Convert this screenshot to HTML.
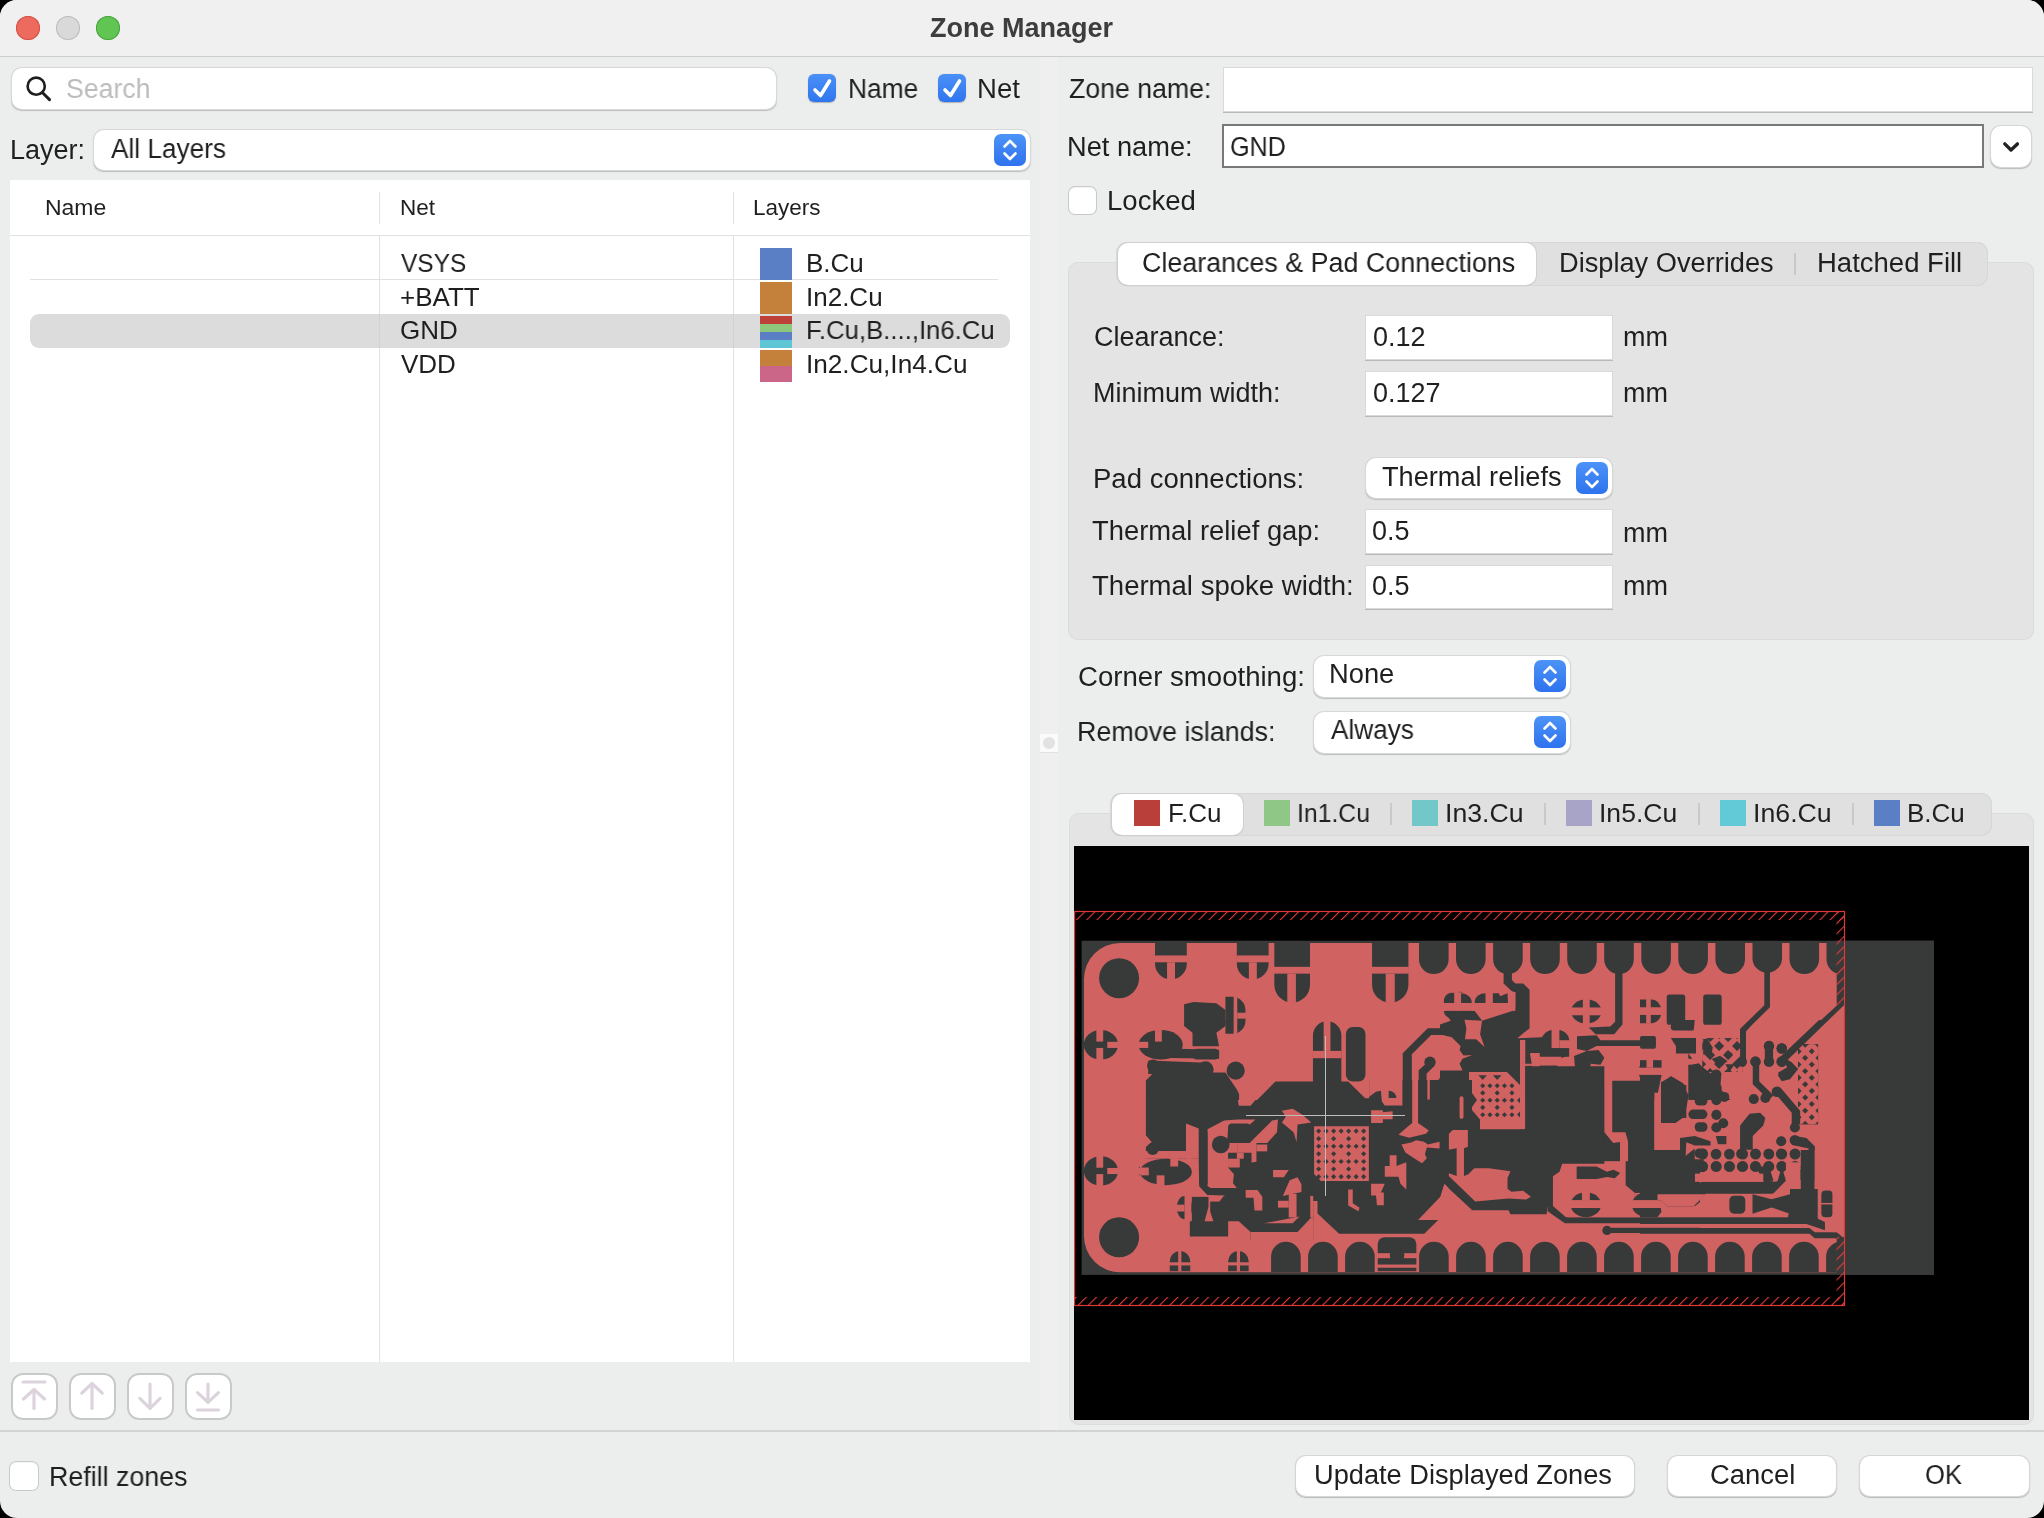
<!DOCTYPE html>
<html><head><meta charset="utf-8">
<style>
*{box-sizing:border-box}
html,body{margin:0;padding:0;width:2044px;height:1518px;overflow:hidden;background:#000}
body{font-family:"Liberation Sans",sans-serif;color:#1f1f1f}
#win{position:absolute;left:0;top:0;width:2044px;height:1518px;border-radius:17px;background:#eceeed;overflow:hidden}
.a{position:absolute}
.t{position:absolute;white-space:nowrap;line-height:1;will-change:transform}
.tl{position:absolute;top:16px;width:24px;height:24px;border-radius:50%}
.field{position:absolute;background:#fff;box-shadow:0 0 0 1px #d9d9d9, 0 1px 0 1px #b9b9b9}
.rfield{position:absolute;background:#fff;border-radius:10px;box-shadow:0 0 0 1px #d8d8d8, 0 1px 1px 0.5px #bdbdbd}
.cb{position:absolute;width:28px;height:28px;border-radius:6px;background:linear-gradient(#4b90f7,#2f75ee);box-shadow:0 0.5px 1px rgba(0,0,0,.25)}
.cbo{position:absolute;width:28px;height:28px;border-radius:6px;background:#fff;box-shadow:0 0 0 1px #c9c9c9, inset 0 1px 1px rgba(0,0,0,.05)}
.step{position:absolute;width:32px;height:32px;border-radius:7px;background:linear-gradient(#4c93f7,#2f72ee)}
.btn{position:absolute;background:#fff;border-radius:10px;box-shadow:0 0 0 1px #d6d6d6, 0 1px 1px 0.5px #bbbbbb}
.ibtn{position:absolute;width:47px;height:47px;background:#fff;border-radius:12px;box-shadow:inset 0 0 0 2px #c9c9c9}
.sw{position:absolute;width:26px;height:26px}
.sep{position:absolute;width:2px;height:22px;background:#c8c9c8}
</style></head><body>
<div id="win">
  <!-- title bar -->
  <div class="a" style="left:0;top:0;width:2044px;height:56px;background:#f0f0f0"></div>
  <div class="a" style="left:0;top:55.5px;width:2044px;height:1.5px;background:#cbcdcc"></div>
  <div class="tl" style="left:16px;background:#ec6a5e;box-shadow:inset 0 0 0 1px #d5514a"></div>
  <div class="tl" style="left:56px;background:#d9d9d9;box-shadow:inset 0 0 0 1px #bcbcbc"></div>
  <div class="tl" style="left:96px;background:#61c554;box-shadow:inset 0 0 0 1px #4ba43f"></div>

  <!-- splitter strip -->
  <div class="a" style="left:1040px;top:57px;width:18px;height:1373px;background:#eeefee"></div>
  <div class="a" style="left:1040px;top:734px;width:18px;height:18px;background:#fafafa;box-shadow:0 1px 0 #e2e2e2"></div>
  <div class="a" style="left:1043px;top:737px;width:12px;height:12px;border-radius:50%;background:#e2e2e2"></div>

  <!-- LEFT PANEL -->
  <div class="rfield" style="left:12px;top:67.5px;width:764px;height:41px"></div>
  <svg class="a" style="left:20px;top:70px" width="40" height="40" viewBox="0 0 40 40">
    <circle cx="16.2" cy="16.2" r="8.6" fill="none" stroke="#1e1e1e" stroke-width="2.6"/>
    <line x1="22.6" y1="22.8" x2="29.5" y2="29.6" stroke="#1e1e1e" stroke-width="3" stroke-linecap="round"/>
  </svg>
  <div class="cb" style="left:808px;top:74px"></div>
  <svg class="a" style="left:808px;top:74px" width="28" height="28" viewBox="0 0 28 28"><polyline points="7,16 12.5,21.5 21.5,7" fill="none" stroke="#fff" stroke-width="3.6" stroke-linecap="round" stroke-linejoin="round"/></svg>
  <div class="cb" style="left:938px;top:74px"></div>
  <svg class="a" style="left:938px;top:74px" width="28" height="28" viewBox="0 0 28 28"><polyline points="7,16 12.5,21.5 21.5,7" fill="none" stroke="#fff" stroke-width="3.6" stroke-linecap="round" stroke-linejoin="round"/></svg>

  <div class="rfield" style="left:94px;top:129.5px;width:936px;height:40.5px"></div>
  <div class="step" style="left:994px;top:134px"></div>
  <svg class="a" style="left:994px;top:134px" width="32" height="32" viewBox="0 0 32 32"><polyline points="10.5,12.5 16,7 21.5,12.5" fill="none" stroke="#fff" stroke-width="2.6" stroke-linecap="round" stroke-linejoin="round"/><polyline points="10.5,19.5 16,25 21.5,19.5" fill="none" stroke="#fff" stroke-width="2.6" stroke-linecap="round" stroke-linejoin="round"/></svg>

  <!-- table -->
  <div class="a" style="left:10px;top:180px;width:1020px;height:1182px;background:#fff"></div>
  <div class="a" style="left:10px;top:234.5px;width:1020px;height:1.5px;background:#e1e1e1"></div>
  <div class="a" style="left:378.5px;top:192px;width:1.5px;height:32px;background:#e1e1e1"></div>
  <div class="a" style="left:732.5px;top:192px;width:1.5px;height:32px;background:#e1e1e1"></div>
  <div class="a" style="left:378.5px;top:236px;width:1.5px;height:1126px;background:#e1e1e1"></div>
  <div class="a" style="left:732.5px;top:236px;width:1.5px;height:1126px;background:#e1e1e1"></div>
  <div class="a" style="left:30px;top:278.5px;width:968px;height:1.5px;background:#e1e1e1"></div>
  <div class="a" style="left:30px;top:314px;width:980px;height:34px;border-radius:9px;background:#dcdcdc"></div>
  <div class="a" style="left:378.5px;top:314px;width:1.5px;height:34px;background:#d2d2d2"></div>
  <div class="a" style="left:732.5px;top:314px;width:1.5px;height:34px;background:#d2d2d2"></div>
  <div class="a" style="left:760px;top:248px;width:32px;height:32px;background:#5a7fc4"></div>
  <div class="a" style="left:760px;top:282px;width:32px;height:32px;background:#c3813c"></div>
  <div class="a" style="left:760px;top:316px;width:32px;height:8px;background:#bd4139"></div>
  <div class="a" style="left:760px;top:324px;width:32px;height:8px;background:#8ec77c"></div>
  <div class="a" style="left:760px;top:332px;width:32px;height:8px;background:#5a7fc4"></div>
  <div class="a" style="left:760px;top:340px;width:32px;height:8px;background:#5dc5d4"></div>
  <div class="a" style="left:760px;top:350px;width:32px;height:16px;background:#c3813c"></div>
  <div class="a" style="left:760px;top:366px;width:32px;height:16px;background:#cc6688"></div>

  <!-- icon buttons -->
  <div class="ibtn" style="left:10.5px;top:1372.5px"></div>
  <div class="ibtn" style="left:68.5px;top:1372.5px"></div>
  <div class="ibtn" style="left:126.5px;top:1372.5px"></div>
  <div class="ibtn" style="left:184.5px;top:1372.5px"></div>
  <svg class="a" style="left:0;top:1360px" width="240" height="70" viewBox="0 1360 240 70">
    <g fill="none" stroke="#dcd3dd" stroke-width="3.2" stroke-linecap="round" stroke-linejoin="round">
      <line x1="23" y1="1382" x2="45" y2="1382"/>
      <polyline points="23.5,1399 34,1389.5 44.5,1399"/><line x1="34" y1="1390" x2="34" y2="1408.5"/>
      <polyline points="81.8,1393.2 92,1383.5 102.2,1393.2"/><line x1="92" y1="1384" x2="92" y2="1408.5"/>
      <polyline points="139.8,1398.4 150,1408.3 160.2,1398.4"/><line x1="150" y1="1384" x2="150" y2="1408"/>
      <polyline points="197.5,1392.6 208,1402.3 218.4,1392.6"/><line x1="208" y1="1384" x2="208" y2="1402"/>
      <line x1="197.5" y1="1410" x2="218.5" y2="1410"/>
    </g>
  </svg>

  <!-- RIGHT PANEL -->
  <div class="field" style="left:1224px;top:67.5px;width:808px;height:43px"></div>
  <div class="a" style="left:1222px;top:124px;width:762px;height:44px;background:#fff;border:2px solid #787878"></div>
  <div class="btn" style="left:1991px;top:125.5px;width:40px;height:41px"></div>
  <svg class="a" style="left:1991px;top:125.5px" width="40" height="41" viewBox="0 0 40 41"><polyline points="13.8,17.9 20,24 26.4,17.9" fill="none" stroke="#222" stroke-width="3.4" stroke-linecap="round" stroke-linejoin="round"/></svg>
  <div class="cbo" style="left:1068.5px;top:186.5px;width:27px;height:27px"></div>

  <!-- tab panel -->
  <div class="a" style="left:1068px;top:262px;width:965.5px;height:377.5px;border-radius:10px;background:#e3e4e3;box-shadow:inset 0 0 0 1px #dbdcdb"></div>
  <div class="a" style="left:1116px;top:242px;width:872px;height:43.5px;border-radius:11px;background:#dfe0df;box-shadow:inset 0 0 0 1px #d6d7d6"></div>
  <div class="a" style="left:1117.5px;top:243px;width:418.5px;height:41.5px;border-radius:10px;background:#fff;box-shadow:0 0 0 1px #d0d0d0, 0 1px 1px #b4b4b4"></div>
  <div class="sep" style="left:1794px;top:253px"></div>

  <div class="field" style="left:1366px;top:315.5px;width:246px;height:43px"></div>
  <div class="field" style="left:1366px;top:371.5px;width:246px;height:43px"></div>
  <div class="rfield" style="left:1366px;top:457.5px;width:246px;height:40.5px"></div>
  <div class="step" style="left:1576px;top:462px"></div>
  <svg class="a" style="left:1576px;top:462px" width="32" height="32" viewBox="0 0 32 32"><polyline points="10.5,12.5 16,7 21.5,12.5" fill="none" stroke="#fff" stroke-width="2.6" stroke-linecap="round" stroke-linejoin="round"/><polyline points="10.5,19.5 16,25 21.5,19.5" fill="none" stroke="#fff" stroke-width="2.6" stroke-linecap="round" stroke-linejoin="round"/></svg>
  <div class="field" style="left:1366px;top:510px;width:246px;height:42.5px"></div>
  <div class="field" style="left:1366px;top:565.5px;width:246px;height:42.5px"></div>

  <div class="rfield" style="left:1314px;top:656px;width:256px;height:40.5px"></div>
  <div class="step" style="left:1534px;top:660px"></div>
  <svg class="a" style="left:1534px;top:660px" width="32" height="32" viewBox="0 0 32 32"><polyline points="10.5,12.5 16,7 21.5,12.5" fill="none" stroke="#fff" stroke-width="2.6" stroke-linecap="round" stroke-linejoin="round"/><polyline points="10.5,19.5 16,25 21.5,19.5" fill="none" stroke="#fff" stroke-width="2.6" stroke-linecap="round" stroke-linejoin="round"/></svg>
  <div class="rfield" style="left:1314px;top:712px;width:256px;height:40.5px"></div>
  <div class="step" style="left:1534px;top:716px"></div>
  <svg class="a" style="left:1534px;top:716px" width="32" height="32" viewBox="0 0 32 32"><polyline points="10.5,12.5 16,7 21.5,12.5" fill="none" stroke="#fff" stroke-width="2.6" stroke-linecap="round" stroke-linejoin="round"/><polyline points="10.5,19.5 16,25 21.5,19.5" fill="none" stroke="#fff" stroke-width="2.6" stroke-linecap="round" stroke-linejoin="round"/></svg>

  <!-- canvas panel -->
  <div class="a" style="left:1068.5px;top:812.5px;width:965px;height:612.5px;border-radius:10px;background:#e3e4e3;box-shadow:inset 0 0 0 1px #dbdcdb"></div>
  <div class="a" style="left:1110px;top:792.5px;width:882px;height:43px;border-radius:11px;background:#dfe0df;box-shadow:inset 0 0 0 1px #d6d7d6"></div>
  <div class="a" style="left:1111.5px;top:793.5px;width:131px;height:41px;border-radius:10px;background:#fff;box-shadow:0 0 0 1px #d0d0d0, 0 1px 1px #b4b4b4"></div>
  <div class="sw" style="left:1134px;top:800px;background:#b9403a"></div>
  <div class="sw" style="left:1264px;top:800px;background:#8fc886"></div>
  <div class="sw" style="left:1412px;top:800px;background:#72c8c8"></div>
  <div class="sw" style="left:1566px;top:800px;background:#a8a4c8"></div>
  <div class="sw" style="left:1720px;top:800px;background:#62c9d6"></div>
  <div class="sw" style="left:1874px;top:800px;background:#5a7fc4"></div>
  <div class="sep" style="left:1390px;top:803px"></div>
  <div class="sep" style="left:1544px;top:803px"></div>
  <div class="sep" style="left:1698px;top:803px"></div>
  <div class="sep" style="left:1852px;top:803px"></div>
  <div class="a" style="left:1074px;top:846px;width:954.5px;height:574px;background:#000;overflow:hidden">
<svg width="954.5" height="574" viewBox="1074 846 954.5 574" style="position:absolute;left:0;top:0;display:block">
<rect x="1074" y="846" width="955" height="574" fill="#000"/>
<rect x="1081.6" y="940.7" width="852.3" height="334.2" fill="#383a3a"/>
<path d="M1120,943 L1844.5,943 L1844.5,1272.2 L1120,1272.2 A36,36 0 0 1 1084,1236.2 L1084,979 A36,36 0 0 1 1120,943 Z" fill="#d16262"/>
<g transform="translate(1080,935) scale(0.227273)"><path d="M330,35 L470,35 L470,125 A70,70 0 0 1 400,195 L400,195 A70,70 0 0 1 330,125 Z" fill="#383a3a"/><rect x="328" y="90" width="144" height="30" fill="#d16262"/><rect x="383" y="120" width="35" height="77" fill="#d16262"/><path d="M690,35 L830,35 L830,125 A70,70 0 0 1 760,195 L760,195 A70,70 0 0 1 690,125 Z" fill="#383a3a"/><rect x="688" y="90" width="144" height="30" fill="#d16262"/><rect x="743" y="120" width="35" height="77" fill="#d16262"/><path d="M855,35 L1012,35 L1012,219 A78,78 0 0 1 934,297 L933,297 A78,78 0 0 1 855,219 Z" fill="#383a3a"/><rect x="853" y="140" width="161" height="30" fill="#d16262"/><rect x="912" y="170" width="38" height="129" fill="#d16262"/><path d="M1285,35 L1445,35 L1445,219 A78,78 0 0 1 1367,297 L1363,297 A78,78 0 0 1 1285,219 Z" fill="#383a3a"/><rect x="1283" y="140" width="164" height="30" fill="#d16262"/><rect x="1345" y="170" width="40" height="129" fill="#d16262"/><circle cx="172" cy="190" r="88" fill="#383a3a"/><circle cx="172" cy="1330" r="88" fill="#383a3a"/><ellipse cx="92" cy="483" rx="75" ry="65" fill="#383a3a"/><rect x="72" y="416" width="30" height="53" fill="#d16262"/><rect x="72" y="497" width="30" height="53" fill="#d16262"/><rect x="120" y="470" width="52" height="27" fill="#d16262"/><ellipse cx="355" cy="483" rx="97" ry="65" fill="#383a3a"/><rect x="330" y="416" width="30" height="53" fill="#d16262"/><rect x="255" y="470" width="45" height="27" fill="#d16262"/><ellipse cx="92" cy="1038" rx="75" ry="65" fill="#383a3a"/><rect x="72" y="971" width="30" height="53" fill="#d16262"/><rect x="72" y="1052" width="30" height="53" fill="#d16262"/><rect x="120" y="1025" width="52" height="27" fill="#d16262"/><ellipse cx="355" cy="1038" rx="97" ry="65" fill="#383a3a"/><rect x="330" y="971" width="30" height="53" fill="#d16262"/><rect x="330" y="1052" width="30" height="53" fill="#d16262"/><rect x="255" y="1025" width="45" height="27" fill="#d16262"/><path d="M395,1480 L395,1435 A45,45 0 0 1 485,1435 L485,1480 Z" fill="#383a3a"/><rect x="432" y="1390" width="14" height="90" fill="#d16262"/><rect x="390" y="1440" width="100" height="14" fill="#d16262"/><path d="M652,1480 L652,1435 A45,45 0 0 1 742,1435 L742,1480 Z" fill="#383a3a"/><rect x="690" y="1390" width="14" height="90" fill="#d16262"/><rect x="647" y="1440" width="100" height="14" fill="#d16262"/><path d="M458,305 L500,295 L600,300 L640,330 L640,400 L600,430 L612,490 L495,490 L495,430 L458,400 Z" fill="#383a3a"/><path d="M640,272 L670,272 A58,58 0 0 1 728,330 L728,377 A58,58 0 0 1 670,435 L640,435 Z" fill="#383a3a"/><rect x="676" y="268" width="16" height="172" fill="#d16262"/><rect x="692" y="342" width="40" height="26" fill="#d16262"/><rect x="580" y="360" width="60" height="30" fill="#383a3a" transform="rotate(35 610 375)"/><rect x="495" y="500" width="117" height="48" rx="20" fill="#383a3a"/><path d="M330,498 L612,505 L612,545 L330,540 Z" fill="#383a3a"/><circle cx="322" cy="575" r="27" fill="#383a3a"/><circle cx="552" cy="592" r="36" fill="#383a3a"/><circle cx="685" cy="597" r="40" fill="#383a3a"/><path d="M300,552 L560,562 L560,612 L300,612 Z" fill="#383a3a"/><path d="M290,640 L325,605 L640,605 L690,680 L700,700 L700,750 L755,750 L860,645 L1025,645 L1025,540 L1150,540 L1150,645 L1180,645 L1255,718 L1420,718 L1420,860 L1600,1040 L1600,1230 L1515,1315 L1140,1315 L1045,1225 L1045,1170 L1012,1170 L1012,1230 L935,1305 L745,1305 L690,1250 L690,1140 L560,1140 L525,1105 L525,860 L470,860 L470,945 L305,945 L290,920 Z" fill="#383a3a"/><path d="M1025,540 L1025,442 A62,62 0 0 1 1150,442 L1150,540 Z" fill="#383a3a"/><rect x="1072" y="378" width="30" height="132" fill="#d16262"/><rect x="1025" y="510" width="125" height="32" fill="#d16262"/><rect x="1170" y="405" width="86" height="240" rx="30" fill="#383a3a"/><path d="M560,860 L560,1100 L690,1100 L690,1000 L650,960 L650,880 Z" fill="#d16262"/><circle cx="618" cy="922" r="38" fill="#383a3a"/><path d="M650,870 L760,815 L850,815 L850,880 L780,900 L760,960 L700,990 L650,960 Z" fill="#d16262"/><path d="M700,880 L840,860 L860,830 L880,860 L760,930 Z" fill="#383a3a"/><path d="M890,770 L940,770 L1000,830 L950,850 L950,905 L915,850 L890,830 Z" fill="#d16262"/><path d="M760,900 L830,900 L830,950 L760,950 Z" fill="#d16262"/><path d="M655,960 L720,960 L760,1040 L720,1090 L655,1090 Z" fill="#d16262"/><rect x="850" y="1035" width="70" height="30" fill="#d16262"/><path d="M870,1100 L940,1080 L975,1120 L960,1270 L820,1270 L880,1230 L900,1170 Z" fill="#d16262"/><path d="M720,1110 L800,1130 L800,1210 L770,1210 L750,1150 Z" fill="#d16262"/><circle cx="940" cy="1200" r="62" fill="#383a3a"/><rect x="895" y="1205" width="70" height="16" fill="#d16262"/><rect x="925" y="1140" width="14" height="130" fill="#d16262"/><path d="M490,1170 L650,1170 L650,1330 L490,1330 Z" fill="#383a3a"/><path d="M425,1150 A50,50 0 0 1 490,1200 L490,1250 A50,50 0 0 1 425,1250 Z" fill="#383a3a"/><rect x="455" y="1140" width="14" height="120" fill="#d16262"/><rect x="420" y="1195" width="70" height="14" fill="#d16262"/><path d="M545,1190 L590,1190 L580,1260 L550,1260 Z" fill="#d16262"/><rect x="600" y="1140" width="35" height="120" fill="#d16262"/><polygon points="1030,842 1271,842 1271,1082 1060,1082 1030,1052" fill="#d16262"/><rect x="1042" y="854.8" width="16" height="16" fill="#383a3a" transform="rotate(45 1050 862.8)"/><rect x="1075" y="854.8" width="16" height="16" fill="#383a3a" transform="rotate(45 1083 862.8)"/><rect x="1108" y="854.8" width="16" height="16" fill="#383a3a" transform="rotate(45 1116 862.8)"/><rect x="1141" y="854.8" width="16" height="16" fill="#383a3a" transform="rotate(45 1149 862.8)"/><rect x="1174" y="854.8" width="16" height="16" fill="#383a3a" transform="rotate(45 1182 862.8)"/><rect x="1207" y="854.8" width="16" height="16" fill="#383a3a" transform="rotate(45 1215 862.8)"/><rect x="1240" y="854.8" width="16" height="16" fill="#383a3a" transform="rotate(45 1248 862.8)"/><rect x="1042" y="888.1999999999999" width="16" height="16" fill="#383a3a" transform="rotate(45 1050 896.1999999999999)"/><rect x="1108" y="888.1999999999999" width="16" height="16" fill="#383a3a" transform="rotate(45 1116 896.1999999999999)"/><rect x="1174" y="888.1999999999999" width="16" height="16" fill="#383a3a" transform="rotate(45 1182 896.1999999999999)"/><rect x="1240" y="888.1999999999999" width="16" height="16" fill="#383a3a" transform="rotate(45 1248 896.1999999999999)"/><rect x="1042" y="921.5999999999999" width="16" height="16" fill="#383a3a" transform="rotate(45 1050 929.5999999999999)"/><rect x="1075" y="921.5999999999999" width="16" height="16" fill="#383a3a" transform="rotate(45 1083 929.5999999999999)"/><rect x="1108" y="921.5999999999999" width="16" height="16" fill="#383a3a" transform="rotate(45 1116 929.5999999999999)"/><rect x="1141" y="921.5999999999999" width="16" height="16" fill="#383a3a" transform="rotate(45 1149 929.5999999999999)"/><rect x="1174" y="921.5999999999999" width="16" height="16" fill="#383a3a" transform="rotate(45 1182 929.5999999999999)"/><rect x="1207" y="921.5999999999999" width="16" height="16" fill="#383a3a" transform="rotate(45 1215 929.5999999999999)"/><rect x="1240" y="921.5999999999999" width="16" height="16" fill="#383a3a" transform="rotate(45 1248 929.5999999999999)"/><rect x="1042" y="955.0" width="16" height="16" fill="#383a3a" transform="rotate(45 1050 963.0)"/><rect x="1108" y="955.0" width="16" height="16" fill="#383a3a" transform="rotate(45 1116 963.0)"/><rect x="1174" y="955.0" width="16" height="16" fill="#383a3a" transform="rotate(45 1182 963.0)"/><rect x="1240" y="955.0" width="16" height="16" fill="#383a3a" transform="rotate(45 1248 963.0)"/><rect x="1042" y="988.4" width="16" height="16" fill="#383a3a" transform="rotate(45 1050 996.4)"/><rect x="1075" y="988.4" width="16" height="16" fill="#383a3a" transform="rotate(45 1083 996.4)"/><rect x="1108" y="988.4" width="16" height="16" fill="#383a3a" transform="rotate(45 1116 996.4)"/><rect x="1141" y="988.4" width="16" height="16" fill="#383a3a" transform="rotate(45 1149 996.4)"/><rect x="1174" y="988.4" width="16" height="16" fill="#383a3a" transform="rotate(45 1182 996.4)"/><rect x="1207" y="988.4" width="16" height="16" fill="#383a3a" transform="rotate(45 1215 996.4)"/><rect x="1240" y="988.4" width="16" height="16" fill="#383a3a" transform="rotate(45 1248 996.4)"/><rect x="1042" y="1021.8" width="16" height="16" fill="#383a3a" transform="rotate(45 1050 1029.8)"/><rect x="1108" y="1021.8" width="16" height="16" fill="#383a3a" transform="rotate(45 1116 1029.8)"/><rect x="1174" y="1021.8" width="16" height="16" fill="#383a3a" transform="rotate(45 1182 1029.8)"/><rect x="1240" y="1021.8" width="16" height="16" fill="#383a3a" transform="rotate(45 1248 1029.8)"/><rect x="1042" y="1055.1999999999998" width="16" height="16" fill="#383a3a" transform="rotate(45 1050 1063.1999999999998)"/><rect x="1075" y="1055.1999999999998" width="16" height="16" fill="#383a3a" transform="rotate(45 1083 1063.1999999999998)"/><rect x="1108" y="1055.1999999999998" width="16" height="16" fill="#383a3a" transform="rotate(45 1116 1063.1999999999998)"/><rect x="1141" y="1055.1999999999998" width="16" height="16" fill="#383a3a" transform="rotate(45 1149 1063.1999999999998)"/><rect x="1174" y="1055.1999999999998" width="16" height="16" fill="#383a3a" transform="rotate(45 1182 1063.1999999999998)"/><rect x="1207" y="1055.1999999999998" width="16" height="16" fill="#383a3a" transform="rotate(45 1215 1063.1999999999998)"/><rect x="1240" y="1055.1999999999998" width="16" height="16" fill="#383a3a" transform="rotate(45 1248 1063.1999999999998)"/><path d="M1285,775 L1380,770 L1380,830 L1285,830 Z" fill="#d16262"/><path d="M1400,870 L1440,840 L1530,860 L1480,900 L1420,900 Z" fill="#d16262"/><path d="M1440,930 L1530,920 L1560,950 L1500,1000 L1440,960 Z" fill="#d16262"/><path d="M1340,1000 L1380,980 L1400,1050 L1430,1120 L1390,1190 L1300,1190 L1300,1120 L1350,1090 Z" fill="#d16262"/><path d="M1180,1120 L1200,1120 L1200,1180 L1230,1200 L1225,1215 L1180,1190 Z" fill="#d16262"/><path d="M1350,700 L1400,690 L1400,745 L1350,745 Z" fill="#383a3a"/><circle cx="1365" cy="720" r="40" fill="#383a3a"/><rect x="1345" y="690" width="12" height="60" fill="#d16262"/><path d="M1420,880 L1420,520 L1530,410 L1680,410 L1680,440 L1545,440 L1460,525 L1460,880 Z" fill="#383a3a"/><path d="M1490,740 L1490,595 L1540,550 L1560,575 L1525,610 L1525,740 Z" fill="#383a3a"/><circle cx="1540" cy="560" r="25" fill="#383a3a"/><path d="M1540,640 L1600,610 L1760,610 L1760,1100 L1620,1160 L1620,1200 L1760,1200 L1760,1060 Z" fill="#383a3a" opacity="0"/><path d="M1545,680 L1590,620 L1760,620 L1760,1045 L1610,1045 L1545,980 Z" fill="#383a3a"/><path d="M1660,640 L1700,640 L1730,700 L1700,720 L1665,700 Z" fill="#d16262"/><rect x="1668" y="700" width="30" height="150" fill="#d16262"/><path d="M1610,1045 L1760,1160 L1760,1190 L1720,1190 L1600,1080 Z" fill="#383a3a"/><path d="M1620,1060 L1720,1150 L1720,1170 L1640,1170 L1620,1140 Z" fill="#d16262" opacity="0"/><ellipse cx="1665" cy="305" rx="65" ry="55" fill="#383a3a"/><rect x="1650" y="245" width="14" height="120" fill="#d16262"/><rect x="1595" y="298" width="140" height="14" fill="#d16262"/><path d="M1650,360 L1700,370 L1700,430 L1660,430 Z" fill="#383a3a"/><path d="M1310,1480 L1310,1360 A30,30 0 0 1 1340,1330 L1450,1330 A30,30 0 0 1 1480,1360 L1480,1480 Z" fill="#383a3a"/><rect x="1300" y="1400" width="190" height="22" fill="#d16262"/><rect x="1300" y="1450" width="190" height="14" fill="#d16262"/><rect x="1375" y="1320" width="40" height="160" fill="#d16262" opacity="0"/><circle cx="1395" cy="1410" r="32" fill="#383a3a"/></g>
<g transform="translate(1440,960) scale(0.097847)"><polygon points="650,100 735,100 735,205 770,240 850,240 915,305 915,700 860,740 790,800 1040,790 1140,720 1150,850 1180,890 1320,900 1300,980 1250,1000 1010,1000 1000,960 920,960 940,1070 840,1070 830,1431 0,1431 0,1130 230,1130 200,1060 230,1010 330,970 240,975 200,920 210,880 120,790 0,760 0,660 110,620 40,520 330,520 355,520 430,620 740,520 740,480 770,480 770,330 735,320 650,240" fill="#383a3a"/><polygon points="250,610 430,620 410,760 455,890 370,810 255,810 270,700" fill="#d16262"/><rect x="30" y="330" width="740" height="190" rx="0" fill="#d16262"/><path d="M40,440 L40,420 A80,80 0 0 1 145,340 L145,440 Z" fill="#383a3a"/><path d="M215,440 L215,340 A105,100 0 0 1 325,440 Z" fill="#383a3a"/><path d="M355,440 L355,420 A110,85 0 0 1 465,340 L465,440 Z" fill="#383a3a"/><polygon points="540,340 600,340 615,370 690,340 695,440 540,440" fill="#383a3a"/><path d="M40,520 L325,520 A140,90 0 0 1 40,520 Z" fill="#383a3a"/><path d="M1040,900 L1040,820 A140,110 0 0 1 1320,820 L1320,990 L1180,990 L1180,900 Z" fill="#383a3a"/><rect x="1140" y="700" width="80" height="200" rx="0" fill="#d16262"/><rect x="1220" y="820" width="110" height="80" rx="0" fill="#d16262"/><ellipse cx="1495" cy="525" rx="155" ry="125" fill="#383a3a"/><rect x="1460" y="390" width="70" height="270" rx="0" fill="#d16262"/><rect x="1330" y="485" width="330" height="80" rx="0" fill="#d16262"/><polygon points="1790,100 1865,100 1865,660 1780,760 1590,760 1520,690 1740,680 1790,630" fill="#383a3a"/><polygon points="1400,780 1600,770 1640,820 2044,820 2044,880 1600,880 1500,930 1400,910" fill="#383a3a"/><polygon points="1370,980 1500,930 1620,920 1680,1000 1640,1070 1540,1060 1530,1150 1380,1110" fill="#383a3a"/><circle cx="1290" cy="1190" r="48" fill="#383a3a"/><circle cx="1450" cy="1215" r="50" fill="#383a3a"/><polygon points="1190,1075 1240,1140 1320,1180 1340,1260 1360,1431 830,1431 860,1080" fill="#383a3a"/><polygon points="920,950 1020,950 1000,990 1240,990 1240,1075 1000,1075 1020,1130 940,1130 950,1075 860,1080 860,1431 830,1431 830,1060 950,1060 940,990" fill="#d16262"/><polygon points="1500,1240 1640,1240 1640,1431 1500,1431" fill="#383a3a"/></g>
<g transform="translate(1640,960) scale(0.102743)"><polygon points="1210,100 1265,100 1265,460 1030,690 1030,990 975,990 975,670 1210,440" fill="#383a3a"/><circle cx="985" cy="990" r="55" fill="#383a3a"/><polygon points="1985,380 1985,440 1490,920 1440,880" fill="#383a3a"/><rect x="260" y="335" width="180" height="295" rx="25" fill="#383a3a"/><rect x="300" y="615" width="220" height="70" rx="30" fill="#383a3a"/><rect x="615" y="335" width="180" height="295" rx="25" fill="#383a3a"/><path d="M0,385 L110,385 A100,115 0 0 1 110,615 L0,615 Z" fill="#383a3a"/><rect x="60" y="380" width="45" height="240" rx="0" fill="#d16262"/><rect x="0" y="460" width="215" height="75" rx="0" fill="#d16262"/><rect x="0" y="740" width="155" height="125" rx="20" fill="#383a3a"/><polygon points="300,760 545,760 545,910 470,910 510,960 470,960 470,910 350,910 350,840" fill="#383a3a"/><svg x="605" y="760" width="395" height="330" viewBox="605 760 395 330" overflow="hidden"><rect x="605" y="760" width="395" height="330" rx="0" fill="#383a3a"/><line x1="80" y1="760" x2="410" y2="1090" stroke="#d16262" stroke-width="55"/><line x1="80" y1="1090" x2="410" y2="760" stroke="#d16262" stroke-width="55"/><line x1="255" y1="760" x2="585" y2="1090" stroke="#d16262" stroke-width="55"/><line x1="255" y1="1090" x2="585" y2="760" stroke="#d16262" stroke-width="55"/><line x1="430" y1="760" x2="760" y2="1090" stroke="#d16262" stroke-width="55"/><line x1="430" y1="1090" x2="760" y2="760" stroke="#d16262" stroke-width="55"/><line x1="605" y1="760" x2="935" y2="1090" stroke="#d16262" stroke-width="55"/><line x1="605" y1="1090" x2="935" y2="760" stroke="#d16262" stroke-width="55"/><line x1="780" y1="760" x2="1110" y2="1090" stroke="#d16262" stroke-width="55"/><line x1="780" y1="1090" x2="1110" y2="760" stroke="#d16262" stroke-width="55"/><line x1="955" y1="760" x2="1285" y2="1090" stroke="#d16262" stroke-width="55"/><line x1="955" y1="1090" x2="1285" y2="760" stroke="#d16262" stroke-width="55"/><line x1="1130" y1="760" x2="1460" y2="1090" stroke="#d16262" stroke-width="55"/><line x1="1130" y1="1090" x2="1460" y2="760" stroke="#d16262" stroke-width="55"/><line x1="1305" y1="760" x2="1635" y2="1090" stroke="#d16262" stroke-width="55"/><line x1="1305" y1="1090" x2="1635" y2="760" stroke="#d16262" stroke-width="55"/></svg><circle cx="1255" cy="840" r="50" fill="#383a3a"/><circle cx="1255" cy="990" r="50" fill="#383a3a"/><rect x="1215" y="840" width="80" height="150" rx="0" fill="#383a3a"/><circle cx="1380" cy="860" r="50" fill="#383a3a"/><circle cx="1380" cy="990" r="50" fill="#383a3a"/><polygon points="1380,940 1480,1000 1540,1060 1460,1160 1380,1180 1340,1120 1440,1060" fill="#383a3a"/><circle cx="1125" cy="990" r="50" fill="#383a3a"/><polygon points="1100,990 1160,990 1160,1180 1300,1320 1250,1363 1100,1200" fill="#383a3a"/><svg x="1540" y="820" width="195" height="543" viewBox="1540 820 195 543" overflow="hidden"><rect x="1540" y="820" width="195" height="543" rx="0" fill="#383a3a"/><line x1="665" y1="820" x2="1208" y2="1363" stroke="#d16262" stroke-width="55"/><line x1="665" y1="1363" x2="1208" y2="820" stroke="#d16262" stroke-width="55"/><line x1="840" y1="820" x2="1383" y2="1363" stroke="#d16262" stroke-width="55"/><line x1="840" y1="1363" x2="1383" y2="820" stroke="#d16262" stroke-width="55"/><line x1="1015" y1="820" x2="1558" y2="1363" stroke="#d16262" stroke-width="55"/><line x1="1015" y1="1363" x2="1558" y2="820" stroke="#d16262" stroke-width="55"/><line x1="1190" y1="820" x2="1733" y2="1363" stroke="#d16262" stroke-width="55"/><line x1="1190" y1="1363" x2="1733" y2="820" stroke="#d16262" stroke-width="55"/><line x1="1365" y1="820" x2="1908" y2="1363" stroke="#d16262" stroke-width="55"/><line x1="1365" y1="1363" x2="1908" y2="820" stroke="#d16262" stroke-width="55"/><line x1="1540" y1="820" x2="2083" y2="1363" stroke="#d16262" stroke-width="55"/><line x1="1540" y1="1363" x2="2083" y2="820" stroke="#d16262" stroke-width="55"/><line x1="1715" y1="820" x2="2258" y2="1363" stroke="#d16262" stroke-width="55"/><line x1="1715" y1="1363" x2="2258" y2="820" stroke="#d16262" stroke-width="55"/><line x1="1890" y1="820" x2="2433" y2="1363" stroke="#d16262" stroke-width="55"/><line x1="1890" y1="1363" x2="2433" y2="820" stroke="#d16262" stroke-width="55"/><line x1="2065" y1="820" x2="2608" y2="1363" stroke="#d16262" stroke-width="55"/><line x1="2065" y1="1363" x2="2608" y2="820" stroke="#d16262" stroke-width="55"/></svg><polygon points="0,1120 210,1120 160,1363 0,1363" fill="#383a3a"/><polygon points="230,1200 300,1130 420,1200 460,1363 230,1363" fill="#383a3a"/><polygon points="470,1020 580,1020 720,1130 790,1140 780,1250 880,1363 470,1363" fill="#383a3a"/><circle cx="740" cy="1115" r="50" fill="#383a3a"/><circle cx="740" cy="1250" r="55" fill="#383a3a"/><rect x="0" y="975" width="210" height="75" rx="0" fill="#383a3a"/><rect x="60" y="975" width="70" height="75" rx="0" fill="#d16262"/></g>
<g transform="translate(1440,1090) scale(0.097847)"><polygon points="0,0 320,0 320,400 480,400 870,400 870,0 1680,0 1680,430 1770,540 1840,520 1840,950 1990,1050 1990,1300 2044,1300 2044,1431 0,1431" fill="#383a3a"/><rect x="200" y="65" width="40" height="230" rx="20" fill="#d16262"/><polygon points="90,450 130,410 285,410 285,580 245,595 245,880 170,880 170,595 90,610" fill="#d16262"/><polygon points="90,850 170,880 245,880 290,860 350,800 500,800 720,830 690,900 690,1010 730,1040 850,1030 930,1090 880,1120 700,1110 360,1140 90,880" fill="#d16262"/><polygon points="0,1090 40,960 330,1230 0,1431" fill="#d16262"/><polygon points="330,1230 700,1230 720,1270 1090,1270 1100,1190 1290,1360 0,1431 0,1400" fill="#d16262"/><polygon points="0,1431 0,1290 1290,1360 2044,1360 2044,1431" fill="#d16262"/><polygon points="890,690 1010,690 1010,630 1090,680 1090,820 1010,800 1010,780 890,780" fill="#d16262"/><polygon points="1160,900 1250,880 1240,720 1290,740 1830,730 1830,950 1890,950 1990,1050 1990,1300 1310,1300 1160,1150" fill="#d16262"/><polygon points="1400,780 1580,780 1650,840 1780,800 1840,840 1780,900 1650,880 1580,915 1400,915" fill="#383a3a"/><path d="M1340,1300 L1340,1200 A152,150 0 0 1 1645,1200 L1645,1300 Z" fill="#383a3a"/><rect x="1450" y="1040" width="80" height="260" rx="0" fill="#d16262"/><rect x="1330" y="1125" width="330" height="85" rx="0" fill="#d16262"/><rect x="1680" y="0" width="80" height="430" rx="0" fill="#d16262"/><polygon points="1680,430 1770,540 1950,520 1950,400 1840,430 1760,430" fill="#d16262"/><rect x="1840" y="520" width="70" height="430" rx="0" fill="#d16262"/><polygon points="1960,1130 2044,1050 2044,1300 1960,1300" fill="#d16262"/></g>
<g transform="translate(1140,1100) scale(0.097847)"><rect x="0" y="0" width="1770" height="1431" rx="0" fill="#383a3a"/><polygon points="0,0 60,0 60,360 120,430 60,480 60,600 0,600" fill="#d16262"/><polygon points="0,520 530,520 530,600 0,600" fill="#d16262"/><polygon points="0,600 600,600 605,880 690,970 860,975 810,1040 720,1040 720,1240 510,1240 510,1431 0,1431" fill="#d16262"/><polygon points="470,240 600,290 600,600 470,600" fill="#d16262"/><polygon points="690,300 860,210 1000,200 1180,200 1100,270 960,250 900,300 890,440 1000,440 1000,540 900,540 900,690 960,760 950,850 990,900 860,975 690,900" fill="#d16262"/><polygon points="1000,440 1120,440 1350,210 1410,200 1400,330 1300,440 1190,440 1190,630 1140,640 1140,540 1000,540" fill="#d16262"/><polygon points="1190,455 1300,455 1300,525 1190,525" fill="#d16262"/><polygon points="1360,715 1520,715 1470,790 1360,790" fill="#d16262"/><polygon points="1080,920 1200,920 1250,990 1250,1130 1170,1130 1160,1000 1080,1000" fill="#d16262"/><polygon points="1460,980 1530,820 1610,790 1650,860 1650,940" fill="#d16262"/><polygon points="1450,110 1560,90 1660,150 1750,230 1610,250 1600,430 1570,330 1450,230 1490,170" fill="#d16262"/><polygon points="1000,0 1180,0 1130,60 1010,60" fill="#d16262"/><polygon points="900,1240 1010,1240 1130,1350 1130,1431 900,1431" fill="#d16262"/><polygon points="1130,1350 1610,1350 1750,1200 1770,1200 1770,1431 1130,1431" fill="#d16262"/><polygon points="1740,980 1770,980 1770,1200 1740,1200" fill="#d16262"/><rect x="1520" y="960" width="80" height="240" rx="0" fill="#d16262"/><rect x="1410" y="1030" width="110" height="70" rx="0" fill="#d16262"/><polygon points="1270,1260 1630,1190 1560,1260" fill="#d16262"/><circle cx="130" cy="500" r="62" fill="#383a3a"/><ellipse cx="265" cy="735" rx="265" ry="135" fill="#383a3a"/><rect x="0" y="690" width="90" height="80" rx="0" fill="#d16262"/><rect x="170" y="770" width="80" height="110" rx="0" fill="#d16262"/><rect x="310" y="590" width="80" height="90" rx="0" fill="#d16262"/><rect x="605" y="300" width="85" height="580" rx="40" fill="#383a3a"/><polygon points="605,880 690,880 720,900 1000,900 1000,970 690,970" fill="#383a3a"/><circle cx="825" cy="455" r="90" fill="#383a3a"/><rect x="900" y="240" width="230" height="200" rx="40" fill="#383a3a"/><rect x="990" y="540" width="70" height="60" rx="0" fill="#d16262"/><polygon points="900,600 1020,600 1020,690 900,690" fill="#d16262"/><ellipse cx="455" cy="1100" rx="80" ry="118" fill="#383a3a"/><rect x="455" y="975" width="70" height="255" rx="0" fill="#d16262"/><rect x="365" y="1070" width="90" height="70" rx="0" fill="#d16262"/><rect x="510" y="1240" width="390" height="160" rx="20" fill="#383a3a"/><rect x="530" y="990" width="170" height="250" rx="0" fill="#383a3a"/><rect x="720" y="1040" width="180" height="200" rx="0" fill="#383a3a"/><polygon points="660,1240 700,1090 750,1240" fill="#d16262"/><rect x="505" y="1395" width="400" height="36" rx="0" fill="#d16262"/></g>
<g transform="translate(1330,1080) scale(0.097847)"><polygon points="400,0 1210,0 1210,1000 1170,1060 1130,1190 900,1431 400,1431" fill="#383a3a"/><polygon points="400,0 740,0 740,260 560,260 530,220 520,110 470,120 400,170" fill="#d16262"/><polygon points="420,310 540,310 540,330 640,320 640,400 540,400 540,440 420,440" fill="#d16262"/><polygon points="840,0 900,0 900,440 1010,515 980,550 810,590 700,560 790,480 840,440" fill="#d16262"/><polygon points="995,0 1020,0 1020,200 995,200" fill="#d16262"/><polygon points="730,660 830,640 880,615 960,630 1000,660 1120,630 1120,700 990,690 970,760 990,800 940,850 860,800 770,740" fill="#d16262"/><polygon points="610,770 680,770 680,880 780,840 780,1120 720,1060 700,990 560,990 560,880 610,880" fill="#d16262"/><polygon points="420,1060 560,1060 520,1150 550,1150 550,1280 480,1280 470,1180 420,1180" fill="#d16262"/><polygon points="1170,1060 1210,1100 1210,1431 900,1431 1130,1190" fill="#d16262"/><path d="M600,110 A80,75 0 0 1 680,185 L600,185 Z" fill="#383a3a"/></g>
<polygon points="1469,1072 1507,1072 1521,1086 1525,1086 1525,1128 1516,1128 1511,1120 1505,1125 1498,1119 1491,1126 1487,1128 1472,1110 1472,1080 1469,1080" fill="#d16262"/>
<rect x="1480.9" y="1084.0" width="3.6" height="3.6" fill="#383a3a" transform="rotate(45 1482.7 1085.8)"/>
<rect x="1488.2" y="1084.0" width="3.6" height="3.6" fill="#383a3a" transform="rotate(45 1490 1085.8)"/>
<rect x="1495.4" y="1084.0" width="3.6" height="3.6" fill="#383a3a" transform="rotate(45 1497.2 1085.8)"/>
<rect x="1502.7" y="1084.0" width="3.6" height="3.6" fill="#383a3a" transform="rotate(45 1504.5 1085.8)"/>
<rect x="1510.1000000000001" y="1084.0" width="3.6" height="3.6" fill="#383a3a" transform="rotate(45 1511.9 1085.8)"/>
<rect x="1480.9" y="1091.1000000000001" width="3.6" height="3.6" fill="#383a3a" transform="rotate(45 1482.7 1092.9)"/>
<rect x="1495.4" y="1091.1000000000001" width="3.6" height="3.6" fill="#383a3a" transform="rotate(45 1497.2 1092.9)"/>
<rect x="1510.1000000000001" y="1091.1000000000001" width="3.6" height="3.6" fill="#383a3a" transform="rotate(45 1511.9 1092.9)"/>
<rect x="1480.9" y="1098.5" width="3.6" height="3.6" fill="#383a3a" transform="rotate(45 1482.7 1100.3)"/>
<rect x="1488.2" y="1098.5" width="3.6" height="3.6" fill="#383a3a" transform="rotate(45 1490 1100.3)"/>
<rect x="1495.4" y="1098.5" width="3.6" height="3.6" fill="#383a3a" transform="rotate(45 1497.2 1100.3)"/>
<rect x="1502.7" y="1098.5" width="3.6" height="3.6" fill="#383a3a" transform="rotate(45 1504.5 1100.3)"/>
<rect x="1510.1000000000001" y="1098.5" width="3.6" height="3.6" fill="#383a3a" transform="rotate(45 1511.9 1100.3)"/>
<rect x="1480.9" y="1105.6000000000001" width="3.6" height="3.6" fill="#383a3a" transform="rotate(45 1482.7 1107.4)"/>
<rect x="1495.4" y="1105.6000000000001" width="3.6" height="3.6" fill="#383a3a" transform="rotate(45 1497.2 1107.4)"/>
<rect x="1510.1000000000001" y="1105.6000000000001" width="3.6" height="3.6" fill="#383a3a" transform="rotate(45 1511.9 1107.4)"/>
<rect x="1480.9" y="1113.0" width="3.6" height="3.6" fill="#383a3a" transform="rotate(45 1482.7 1114.8)"/>
<rect x="1488.2" y="1113.0" width="3.6" height="3.6" fill="#383a3a" transform="rotate(45 1490 1114.8)"/>
<rect x="1495.4" y="1113.0" width="3.6" height="3.6" fill="#383a3a" transform="rotate(45 1497.2 1114.8)"/>
<rect x="1502.7" y="1113.0" width="3.6" height="3.6" fill="#383a3a" transform="rotate(45 1504.5 1114.8)"/>
<rect x="1510.1000000000001" y="1113.0" width="3.6" height="3.6" fill="#383a3a" transform="rotate(45 1511.9 1114.8)"/>
<polygon points="1478.4,1075.3 1486.9,1075.3 1482.7,1080" fill="#383a3a"/><polygon points="1492.9,1075.3 1501.4,1075.3 1497.2,1080" fill="#383a3a"/>
<polygon points="1472,1093 1477,1100 1472,1107" fill="#383a3a"/><polygon points="1521.5,1095.8 1517,1100.3 1521.5,1104.8" fill="#383a3a"/><polygon points="1521.5,1110 1517,1114.6 1521.5,1119" fill="#383a3a"/>
<g transform="translate(1520,1040) scale(0.131770)"><polygon points="640,310 700,310 700,700 760,770 820,770 820,940 760,940 760,770 700,710 640,700" fill="#d16262"/><path d="M700,310 L1020,310 L1020,1160 L820,1160 L820,770 L800,700 L700,700 Z" fill="#383a3a"/><rect x="1020" y="400" width="50" height="470" rx="0" fill="#d16262"/><polygon points="1070,320 1140,280 1230,330 1280,420 1250,580 1180,630 1070,630" fill="#383a3a"/><polygon points="1070,630 1366,630 1366,780 1270,760 1200,780 1070,790" fill="#d16262"/><ellipse cx="987" cy="240" rx="88" ry="90" fill="#383a3a"/><rect x="960" y="140" width="50" height="70" rx="0" fill="#d16262"/><rect x="880" y="210" width="210" height="55" rx="0" fill="#d16262"/><polygon points="800,920 1366,920 1366,1230 1330,1260 1120,1260 1020,1160 800,1160" fill="#383a3a"/><polygon points="250,920 800,920 800,1100 870,1160 850,1345 320,1345 250,1280" fill="#d16262"/><polygon points="430,960 580,960 660,1000 710,985 760,1010 720,1050 660,1040 580,1055 430,1055" fill="#383a3a"/><ellipse cx="500" cy="1250" rx="115" ry="95" fill="#383a3a"/><rect x="470" y="1150" width="60" height="70" rx="0" fill="#d16262"/><rect x="380" y="1215" width="240" height="60" rx="0" fill="#d16262"/><ellipse cx="962" cy="1250" rx="112" ry="95" fill="#383a3a"/><rect x="840" y="1215" width="250" height="60" rx="0" fill="#d16262"/><polygon points="210,1260 250,1260 360,1355 1366,1355 1366,1390 340,1390 210,1300" fill="#383a3a"/><circle cx="660" cy="1445" r="35" fill="#383a3a"/><rect x="660" y="1425" width="706" height="40" rx="0" fill="#383a3a"/><rect x="0" y="0" width="40" height="660" rx="0" fill="#d16262"/><polygon points="90,100 150,100 150,200 90,230" fill="#d16262"/><polygon points="40,200 640,200 640,310 640,940 320,940 300,1000 210,1060 0,1060 0,680 40,680" fill="#383a3a"/></g>
<g transform="translate(1680,1020) scale(0.105402)"><rect x="1120" y="230" width="190" height="760" rx="0" fill="#383a3a"/><svg x="1120" y="230" width="190" height="760" viewBox="1120 230 190 760" overflow="hidden"><rect x="1120" y="230" width="190" height="760" rx="0" fill="#383a3a"/><line x1="120" y1="230" x2="880" y2="990" stroke="#d16262" stroke-width="48"/><line x1="120" y1="990" x2="880" y2="230" stroke="#d16262" stroke-width="48"/><line x1="245" y1="230" x2="1005" y2="990" stroke="#d16262" stroke-width="48"/><line x1="245" y1="990" x2="1005" y2="230" stroke="#d16262" stroke-width="48"/><line x1="370" y1="230" x2="1130" y2="990" stroke="#d16262" stroke-width="48"/><line x1="370" y1="990" x2="1130" y2="230" stroke="#d16262" stroke-width="48"/><line x1="495" y1="230" x2="1255" y2="990" stroke="#d16262" stroke-width="48"/><line x1="495" y1="990" x2="1255" y2="230" stroke="#d16262" stroke-width="48"/><line x1="620" y1="230" x2="1380" y2="990" stroke="#d16262" stroke-width="48"/><line x1="620" y1="990" x2="1380" y2="230" stroke="#d16262" stroke-width="48"/><line x1="745" y1="230" x2="1505" y2="990" stroke="#d16262" stroke-width="48"/><line x1="745" y1="990" x2="1505" y2="230" stroke="#d16262" stroke-width="48"/><line x1="870" y1="230" x2="1630" y2="990" stroke="#d16262" stroke-width="48"/><line x1="870" y1="990" x2="1630" y2="230" stroke="#d16262" stroke-width="48"/><line x1="995" y1="230" x2="1755" y2="990" stroke="#d16262" stroke-width="48"/><line x1="995" y1="990" x2="1755" y2="230" stroke="#d16262" stroke-width="48"/><line x1="1120" y1="230" x2="1880" y2="990" stroke="#d16262" stroke-width="48"/><line x1="1120" y1="990" x2="1880" y2="230" stroke="#d16262" stroke-width="48"/><line x1="1245" y1="230" x2="2005" y2="990" stroke="#d16262" stroke-width="48"/><line x1="1245" y1="990" x2="2005" y2="230" stroke="#d16262" stroke-width="48"/><line x1="1370" y1="230" x2="2130" y2="990" stroke="#d16262" stroke-width="48"/><line x1="1370" y1="990" x2="2130" y2="230" stroke="#d16262" stroke-width="48"/><line x1="1495" y1="230" x2="2255" y2="990" stroke="#d16262" stroke-width="48"/><line x1="1495" y1="990" x2="2255" y2="230" stroke="#d16262" stroke-width="48"/></svg><polygon points="570,90 720,0 625,110 625,400 570,400" fill="#383a3a"/><circle cx="585" cy="395" r="48" fill="#383a3a"/><polygon points="1320,0 1400,0 1000,400 950,350" fill="#383a3a"/><circle cx="845" cy="245" r="48" fill="#383a3a"/><circle cx="845" cy="395" r="48" fill="#383a3a"/><rect x="810" y="245" width="70" height="150" rx="0" fill="#383a3a"/><circle cx="965" cy="270" r="50" fill="#383a3a"/><circle cx="965" cy="395" r="50" fill="#383a3a"/><polygon points="965,350 1060,400 1100,470 1020,560 960,570 930,500 1030,440" fill="#383a3a"/><circle cx="715" cy="395" r="48" fill="#383a3a"/><polygon points="690,395 745,395 745,580 860,700 830,740 690,610" fill="#383a3a"/><circle cx="700" cy="750" r="48" fill="#383a3a"/><circle cx="810" cy="740" r="48" fill="#383a3a"/><circle cx="920" cy="680" r="50" fill="#383a3a"/><polygon points="880,670 960,650 1140,860 1140,990 1060,990 1060,880" fill="#383a3a"/><circle cx="1090" cy="1020" r="48" fill="#383a3a"/><polygon points="660,890 760,880 810,930 790,1000 690,1100 690,1230 570,1230 570,1000" fill="#383a3a"/><circle cx="580" cy="1270" r="48" fill="#383a3a"/><circle cx="715" cy="1270" r="48" fill="#383a3a"/><circle cx="960" cy="1150" r="48" fill="#383a3a"/><circle cx="960" cy="1270" r="50" fill="#383a3a"/><circle cx="840" cy="1270" r="48" fill="#383a3a"/><circle cx="1090" cy="1140" r="50" fill="#383a3a"/><polygon points="1090,1100 1200,1120 1280,1200 1280,1518 1140,1518 1140,1420 1200,1340 1220,1220 1090,1190" fill="#383a3a"/><circle cx="1090" cy="1270" r="50" fill="#383a3a"/><circle cx="345" cy="1390" r="50" fill="#383a3a"/><circle cx="470" cy="1390" r="50" fill="#383a3a"/><circle cx="590" cy="1390" r="50" fill="#383a3a"/><circle cx="715" cy="1390" r="50" fill="#383a3a"/><circle cx="840" cy="1390" r="50" fill="#383a3a"/><circle cx="965" cy="1390" r="50" fill="#383a3a"/><circle cx="1090" cy="1390" r="50" fill="#383a3a"/><rect x="140" y="1340" width="120" height="100" rx="40" fill="#383a3a"/><rect x="140" y="1220" width="120" height="90" rx="40" fill="#383a3a"/><rect x="140" y="970" width="120" height="90" rx="40" fill="#383a3a"/><rect x="80" y="850" width="180" height="90" rx="45" fill="#383a3a"/><rect x="140" y="720" width="120" height="90" rx="40" fill="#383a3a"/><circle cx="345" cy="520" r="48" fill="#383a3a"/><circle cx="345" cy="640" r="48" fill="#383a3a"/><circle cx="345" cy="760" r="48" fill="#383a3a"/><circle cx="420" cy="730" r="48" fill="#383a3a"/><circle cx="345" cy="900" r="48" fill="#383a3a"/><circle cx="410" cy="980" r="48" fill="#383a3a"/><circle cx="345" cy="1020" r="48" fill="#383a3a"/><polygon points="90,430 180,410 300,560 250,690 140,690 140,500" fill="#383a3a"/><polygon points="0,0 140,0 130,100 0,90" fill="#383a3a"/><rect x="0" y="170" width="150" height="140" rx="20" fill="#383a3a"/><polygon points="220,180 260,180 310,260 300,330 220,330" fill="#383a3a"/><polygon points="430,310 500,310 470,350 430,340" fill="#383a3a"/><polygon points="0,600 60,620 60,930 0,930" fill="#383a3a"/><polygon points="0,1120 140,1100 290,1150 290,1190 140,1190 60,1160 40,1518 0,1518" fill="#383a3a"/><polygon points="40,1300 140,1220 140,1518 40,1518" fill="#383a3a"/><polygon points="340,1100 440,1100 440,1180 360,1180" fill="#383a3a"/><polygon points="300,370 380,340 450,390 380,450" fill="#383a3a"/><polygon points="430,420 520,420 470,490" fill="#383a3a"/></g>
<g transform="translate(1640,1150) scale(0.102743)"><polygon points="0,0 440,0 440,120 535,90 535,360 600,310 1200,310 1200,270 1300,310 1400,300 1290,425 640,425 520,550 270,550 200,490 0,490" fill="#383a3a"/><polygon points="0,490 200,490 270,550 520,550 640,430 170,430 170,660 0,660" fill="#d16262"/><polygon points="0,565 200,565 210,600 170,655 0,655" fill="#383a3a"/><circle cx="610" cy="40" r="52" fill="#383a3a"/><circle cx="610" cy="160" r="52" fill="#383a3a"/><circle cx="740" cy="40" r="52" fill="#383a3a"/><circle cx="740" cy="160" r="52" fill="#383a3a"/><circle cx="870" cy="40" r="52" fill="#383a3a"/><circle cx="870" cy="160" r="52" fill="#383a3a"/><circle cx="1000" cy="40" r="52" fill="#383a3a"/><circle cx="1000" cy="160" r="52" fill="#383a3a"/><circle cx="1125" cy="40" r="52" fill="#383a3a"/><circle cx="1125" cy="160" r="52" fill="#383a3a"/><circle cx="1255" cy="40" r="52" fill="#383a3a"/><circle cx="1255" cy="160" r="52" fill="#383a3a"/><circle cx="1380" cy="40" r="52" fill="#383a3a"/><circle cx="1380" cy="160" r="52" fill="#383a3a"/><circle cx="1510" cy="40" r="52" fill="#383a3a"/><circle cx="1510" cy="160" r="52" fill="#383a3a"/><rect x="535" y="90" width="85" height="125" rx="0" fill="#383a3a"/><polygon points="1125,160 1255,160 1300,300 1200,300" fill="#383a3a"/><polygon points="1380,160 1420,300 1300,420 1250,400 1340,300" fill="#383a3a"/><rect x="870" y="445" width="155" height="175" rx="45" fill="#383a3a"/><polygon points="1095,430 1280,480 1460,430 1460,620 1280,560 1095,620" fill="#383a3a"/><rect x="1565" y="0" width="135" height="420" rx="0" fill="#383a3a"/><polygon points="1460,380 1730,380 1730,700 1800,740 1800,780 1440,660 1460,540" fill="#383a3a"/><rect x="1765" y="395" width="110" height="260" rx="40" fill="#383a3a"/><rect x="1760" y="515" width="120" height="15" rx="0" fill="#d16262"/><rect x="0" y="655" width="1700" height="65" rx="0" fill="#383a3a"/><polygon points="1700,655 1800,700 1800,760 1700,720" fill="#383a3a"/><polygon points="0,760 1650,760 1700,800 1915,800 1985,860 1985,900 1900,860 1700,860 1650,815 0,815" fill="#383a3a"/><rect x="1700" y="0" width="295" height="380" rx="0" fill="#d16262"/><rect x="1875" y="380" width="120" height="420" rx="0" fill="#d16262"/><rect x="535" y="230" width="665" height="80" rx="0" fill="#d16262"/><rect x="1420" y="120" width="140" height="180" rx="0" fill="#d16262"/></g>
<path d="M1419.0,943 L1448.6,943 L1448.6,959.2 A14.8,14.8 0 0 1 1419.0,959.2 Z" fill="#383a3a"/>
<path d="M1456.0,943 L1485.6,943 L1485.6,959.2 A14.8,14.8 0 0 1 1456.0,959.2 Z" fill="#383a3a"/>
<path d="M1493.1,943 L1522.7,943 L1522.7,959.2 A14.8,14.8 0 0 1 1493.1,959.2 Z" fill="#383a3a"/>
<path d="M1530.2,943 L1559.8,943 L1559.8,959.2 A14.8,14.8 0 0 1 1530.2,959.2 Z" fill="#383a3a"/>
<path d="M1567.2,943 L1596.8,943 L1596.8,959.2 A14.8,14.8 0 0 1 1567.2,959.2 Z" fill="#383a3a"/>
<path d="M1604.2,943 L1633.8,943 L1633.8,959.2 A14.8,14.8 0 0 1 1604.2,959.2 Z" fill="#383a3a"/>
<path d="M1641.3,943 L1670.9,943 L1670.9,959.2 A14.8,14.8 0 0 1 1641.3,959.2 Z" fill="#383a3a"/>
<path d="M1678.3,943 L1707.9,943 L1707.9,959.2 A14.8,14.8 0 0 1 1678.3,959.2 Z" fill="#383a3a"/>
<path d="M1715.4,943 L1745.0,943 L1745.0,959.2 A14.8,14.8 0 0 1 1715.4,959.2 Z" fill="#383a3a"/>
<path d="M1752.5,943 L1782.0,943 L1782.0,959.2 A14.8,14.8 0 0 1 1752.5,959.2 Z" fill="#383a3a"/>
<path d="M1789.5,943 L1819.1,943 L1819.1,959.2 A14.8,14.8 0 0 1 1789.5,959.2 Z" fill="#383a3a"/>
<path d="M1826.5,943 L1856.1,943 L1856.1,959.2 A14.8,14.8 0 0 1 1826.5,959.2 Z" fill="#383a3a"/>
<path d="M1271.1,1272 L1300.7,1272 L1300.7,1256.6 A14.8,14.8 0 0 0 1271.1,1256.6 Z" fill="#383a3a"/>
<path d="M1308.1,1272 L1337.7,1272 L1337.7,1256.6 A14.8,14.8 0 0 0 1308.1,1256.6 Z" fill="#383a3a"/>
<path d="M1345.1,1272 L1374.7,1272 L1374.7,1256.6 A14.8,14.8 0 0 0 1345.1,1256.6 Z" fill="#383a3a"/>
<path d="M1419.1,1272 L1448.7,1272 L1448.7,1256.6 A14.8,14.8 0 0 0 1419.1,1256.6 Z" fill="#383a3a"/>
<path d="M1456.1,1272 L1485.7,1272 L1485.7,1256.6 A14.8,14.8 0 0 0 1456.1,1256.6 Z" fill="#383a3a"/>
<path d="M1493.1,1272 L1522.7,1272 L1522.7,1256.6 A14.8,14.8 0 0 0 1493.1,1256.6 Z" fill="#383a3a"/>
<path d="M1530.1,1272 L1559.7,1272 L1559.7,1256.6 A14.8,14.8 0 0 0 1530.1,1256.6 Z" fill="#383a3a"/>
<path d="M1567.1,1272 L1596.7,1272 L1596.7,1256.6 A14.8,14.8 0 0 0 1567.1,1256.6 Z" fill="#383a3a"/>
<path d="M1604.1,1272 L1633.7,1272 L1633.7,1256.6 A14.8,14.8 0 0 0 1604.1,1256.6 Z" fill="#383a3a"/>
<path d="M1641.1,1272 L1670.7,1272 L1670.7,1256.6 A14.8,14.8 0 0 0 1641.1,1256.6 Z" fill="#383a3a"/>
<path d="M1678.1,1272 L1707.7,1272 L1707.7,1256.6 A14.8,14.8 0 0 0 1678.1,1256.6 Z" fill="#383a3a"/>
<path d="M1715.1,1272 L1744.7,1272 L1744.7,1256.6 A14.8,14.8 0 0 0 1715.1,1256.6 Z" fill="#383a3a"/>
<path d="M1752.1,1272 L1781.7,1272 L1781.7,1256.6 A14.8,14.8 0 0 0 1752.1,1256.6 Z" fill="#383a3a"/>
<path d="M1789.1,1272 L1818.7,1272 L1818.7,1256.6 A14.8,14.8 0 0 0 1789.1,1256.6 Z" fill="#383a3a"/>
<path d="M1826.1,1272 L1855.7,1272 L1855.7,1256.6 A14.8,14.8 0 0 0 1826.1,1256.6 Z" fill="#383a3a"/>
<rect x="1845.5" y="940.7" width="88.4" height="334.2" fill="#383a3a"/>
<line x1="1325.5" y1="1036" x2="1325.5" y2="1196" stroke="#bdbdbd" stroke-width="1"/>
<line x1="1246" y1="1115.5" x2="1405" y2="1115.5" stroke="#bdbdbd" stroke-width="1"/>
<rect x="1836.7" y="940.7" width="9" height="65" fill="#383a3a"/><rect x="1836.7" y="1237" width="9" height="38" fill="#383a3a"/>
<defs><pattern id="hp" patternUnits="userSpaceOnUse" width="7.2" height="7.2" patternTransform="rotate(45)"><rect x="0" y="0" width="1.1" height="7.2" fill="#e33a3a"/></pattern></defs>
<g fill="url(#hp)">
<rect x="1075" y="912" width="769.5" height="8"/>
<rect x="1075" y="1297" width="769.5" height="8"/>
<rect x="1836.5" y="912" width="8" height="94"/><rect x="1836.5" y="1237" width="8" height="68"/>
</g>
<rect x="1074.5" y="911.5" width="770" height="394" fill="none" stroke="#e03838" stroke-width="1.2" stroke-dasharray="none"/>
</svg>
  </div>

  <!-- bottom -->
  <div class="a" style="left:0;top:1430px;width:2044px;height:1.5px;background:#d2d4d3"></div>
  <div class="cbo" style="left:10px;top:1462px"></div>
  <div class="btn" style="left:1296px;top:1456.3px;width:338px;height:39.6px"></div>
  <div class="btn" style="left:1668px;top:1456.3px;width:168px;height:39.6px"></div>
  <div class="btn" style="left:1859.5px;top:1456.3px;width:169px;height:39.6px"></div>

<div class="t" style="left:930.00px;top:14.64px;font-size:27px;font-weight:700;color:#3d3d3d;">Zone Manager</div>
<div class="t" style="left:65.71px;top:75.74px;font-size:27px;font-weight:400;color:#bcbcbc;transform:scaleX(0.9880);transform-origin:0 0;">Search</div>
<div class="t" style="left:847.75px;top:76.04px;font-size:27px;font-weight:400;color:#1f1f1f;transform:scaleX(0.9754);transform-origin:0 0;">Name</div>
<div class="t" style="left:977.36px;top:76.04px;font-size:27px;font-weight:400;color:#1f1f1f;transform:scaleX(1.0200);transform-origin:0 0;">Net</div>
<div class="t" style="left:9.60px;top:137.34px;font-size:27px;font-weight:400;color:#1f1f1f;">Layer:</div>
<div class="t" style="left:110.70px;top:135.54px;font-size:27px;font-weight:400;color:#1f1f1f;transform:scaleX(0.9703);transform-origin:0 0;">All Layers</div>
<div class="t" style="left:45.16px;top:196.75px;font-size:22.5px;font-weight:400;color:#1f1f1f;transform:scaleX(1.0211);transform-origin:0 0;">Name</div>
<div class="t" style="left:399.50px;top:196.95px;font-size:22.5px;font-weight:400;color:#1f1f1f;">Net</div>
<div class="t" style="left:753.00px;top:197.35px;font-size:22.5px;font-weight:400;color:#1f1f1f;">Layers</div>
<div class="t" style="left:401.00px;top:249.59px;font-size:26px;font-weight:400;color:#1f1f1f;transform:scaleX(0.9412);transform-origin:0 0;">VSYS</div>
<div class="t" style="left:400.00px;top:283.89px;font-size:26px;font-weight:400;color:#1f1f1f;">+BATT</div>
<div class="t" style="left:400.00px;top:317.29px;font-size:26px;font-weight:400;color:#1f1f1f;">GND</div>
<div class="t" style="left:401.00px;top:350.99px;font-size:26px;font-weight:400;color:#1f1f1f;">VDD</div>
<div class="t" style="left:805.60px;top:249.69px;font-size:26px;font-weight:400;color:#1f1f1f;">B.Cu</div>
<div class="t" style="left:805.60px;top:283.89px;font-size:26px;font-weight:400;color:#1f1f1f;">In2.Cu</div>
<div class="t" style="left:805.62px;top:317.29px;font-size:26px;font-weight:400;color:#1f1f1f;transform:scaleX(0.9893);transform-origin:0 0;">F.Cu,B....,In6.Cu</div>
<div class="t" style="left:805.59px;top:350.99px;font-size:26px;font-weight:400;color:#1f1f1f;transform:scaleX(1.0064);transform-origin:0 0;">In2.Cu,In4.Cu</div>
<div class="t" style="left:49.41px;top:1463.54px;font-size:27px;font-weight:400;color:#1f1f1f;transform:scaleX(0.9927);transform-origin:0 0;">Refill zones</div>
<div class="t" style="left:1068.61px;top:75.84px;font-size:27px;font-weight:400;color:#1f1f1f;transform:scaleX(0.9887);transform-origin:0 0;">Zone name:</div>
<div class="t" style="left:1067.48px;top:134.24px;font-size:27px;font-weight:400;color:#1f1f1f;transform:scaleX(1.0083);transform-origin:0 0;">Net name:</div>
<div class="t" style="left:1230.07px;top:134.24px;font-size:27px;font-weight:400;color:#1f1f1f;transform:scaleX(0.9310);transform-origin:0 0;">GND</div>
<div class="t" style="left:1107.36px;top:187.94px;font-size:27px;font-weight:400;color:#1f1f1f;transform:scaleX(1.0205);transform-origin:0 0;">Locked</div>
<div class="t" style="left:1142.21px;top:249.74px;font-size:27px;font-weight:400;color:#1f1f1f;transform:scaleX(0.9946);transform-origin:0 0;">Clearances &amp; Pad Connections</div>
<div class="t" style="left:1559.18px;top:249.74px;font-size:27px;font-weight:400;color:#1f1f1f;transform:scaleX(1.0076);transform-origin:0 0;">Display Overrides</div>
<div class="t" style="left:1816.86px;top:249.74px;font-size:27px;font-weight:400;color:#1f1f1f;transform:scaleX(1.0187);transform-origin:0 0;">Hatched Fill</div>
<div class="t" style="left:1094.20px;top:323.74px;font-size:27px;font-weight:400;color:#1f1f1f;">Clearance:</div>
<div class="t" style="left:1372.50px;top:323.84px;font-size:27px;font-weight:400;color:#1f1f1f;">0.12</div>
<div class="t" style="left:1623.30px;top:323.74px;font-size:27px;font-weight:400;color:#1f1f1f;">mm</div>
<div class="t" style="left:1093.20px;top:379.74px;font-size:27px;font-weight:400;color:#1f1f1f;">Minimum width:</div>
<div class="t" style="left:1372.50px;top:379.84px;font-size:27px;font-weight:400;color:#1f1f1f;">0.127</div>
<div class="t" style="left:1623.30px;top:379.74px;font-size:27px;font-weight:400;color:#1f1f1f;">mm</div>
<div class="t" style="left:1092.66px;top:465.74px;font-size:27px;font-weight:400;color:#1f1f1f;transform:scaleX(1.0197);transform-origin:0 0;">Pad connections:</div>
<div class="t" style="left:1382.09px;top:463.54px;font-size:27px;font-weight:400;color:#1f1f1f;transform:scaleX(1.0056);transform-origin:0 0;">Thermal reliefs</div>
<div class="t" style="left:1091.89px;top:517.74px;font-size:27px;font-weight:400;color:#1f1f1f;transform:scaleX(1.0135);transform-origin:0 0;">Thermal relief gap:</div>
<div class="t" style="left:1372.10px;top:517.84px;font-size:27px;font-weight:400;color:#1f1f1f;">0.5</div>
<div class="t" style="left:1623.10px;top:520.04px;font-size:27px;font-weight:400;color:#1f1f1f;">mm</div>
<div class="t" style="left:1091.88px;top:573.24px;font-size:27px;font-weight:400;color:#1f1f1f;transform:scaleX(1.0198);transform-origin:0 0;">Thermal spoke width:</div>
<div class="t" style="left:1372.10px;top:573.24px;font-size:27px;font-weight:400;color:#1f1f1f;">0.5</div>
<div class="t" style="left:1623.10px;top:573.24px;font-size:27px;font-weight:400;color:#1f1f1f;">mm</div>
<div class="t" style="left:1077.78px;top:664.04px;font-size:27px;font-weight:400;color:#1f1f1f;transform:scaleX(1.0219);transform-origin:0 0;">Corner smoothing:</div>
<div class="t" style="left:1328.78px;top:660.94px;font-size:27px;font-weight:400;color:#1f1f1f;transform:scaleX(1.0115);transform-origin:0 0;">None</div>
<div class="t" style="left:1076.81px;top:719.44px;font-size:27px;font-weight:400;color:#1f1f1f;transform:scaleX(0.9949);transform-origin:0 0;">Remove islands:</div>
<div class="t" style="left:1330.80px;top:717.24px;font-size:27px;font-weight:400;color:#1f1f1f;transform:scaleX(0.9694);transform-origin:0 0;">Always</div>
<div class="t" style="left:1167.70px;top:799.79px;font-size:26px;font-weight:400;color:#1f1f1f;">F.Cu</div>
<div class="t" style="left:1297.40px;top:799.79px;font-size:26px;font-weight:400;color:#1f1f1f;transform:scaleX(0.9521);transform-origin:0 0;">In1.Cu</div>
<div class="t" style="left:1444.95px;top:799.79px;font-size:26px;font-weight:400;color:#1f1f1f;transform:scaleX(1.0247);transform-origin:0 0;">In3.Cu</div>
<div class="t" style="left:1598.56px;top:799.79px;font-size:26px;font-weight:400;color:#1f1f1f;transform:scaleX(1.0205);transform-origin:0 0;">In5.Cu</div>
<div class="t" style="left:1752.95px;top:799.79px;font-size:26px;font-weight:400;color:#1f1f1f;transform:scaleX(1.0274);transform-origin:0 0;">In6.Cu</div>
<div class="t" style="left:1907.00px;top:799.79px;font-size:26px;font-weight:400;color:#1f1f1f;">B.Cu</div>
<div class="t" style="left:1314.28px;top:1461.94px;font-size:27px;font-weight:400;color:#1f1f1f;transform:scaleX(1.0078);transform-origin:0 0;">Update Displayed Zones</div>
<div class="t" style="left:1709.69px;top:1461.94px;font-size:27px;font-weight:400;color:#1f1f1f;transform:scaleX(1.0148);transform-origin:0 0;">Cancel</div>
<div class="t" style="left:1925.05px;top:1461.94px;font-size:27px;font-weight:400;color:#1f1f1f;transform:scaleX(0.9486);transform-origin:0 0;">OK</div>
</div>
</body></html>
